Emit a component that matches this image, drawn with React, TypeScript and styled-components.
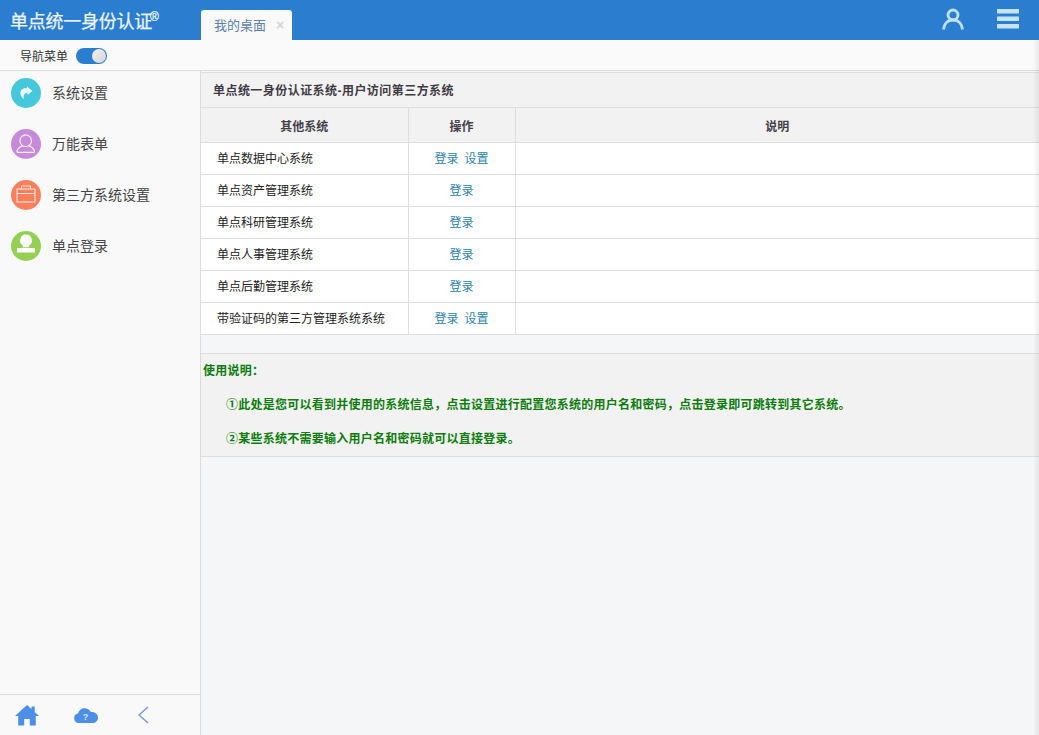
import styled, { createGlobalStyle } from "styled-components";

const GlobalStyle = createGlobalStyle`
  html, body {
    margin: 0;
    padding: 0;
    height: 100%;
    overflow: hidden;
  }
  body {
    font-family: "Liberation Sans", "Noto Sans CJK SC", sans-serif;
    font-size: 12px;
    background: #f5f6f8;
    color: #333;
  }
`;

const menuItems = [
  { name: "系统设置", color: "#45c8dc", icon: "share" },
  { name: "万能表单", color: "#c78ad8", icon: "user" },
  { name: "第三方系统设置", color: "#fb7f5c", icon: "case" },
  { name: "单点登录", color: "#95cf55", icon: "stamp" },
];

const systems = [
  { name: "单点数据中心系统", setting: true },
  { name: "单点资产管理系统", setting: false },
  { name: "单点科研管理系统", setting: false },
  { name: "单点人事管理系统", setting: false },
  { name: "单点后勤管理系统", setting: false },
  { name: "带验证码的第三方管理系统系统", setting: true },
];

function MenuIcon({ icon }: { icon: string }) {
  if (icon === "share") {
    return (
      <svg width="30" height="30" viewBox="0 0 30 30">
        <path d="M16 8.500l5.500 4.500-5 4v-2.300c-3 0-4.500 2.300-3.500 6.300-3-2-4.500-5.500-3-8.500 1.200-2 3.500-2.500 6-2.200z" fill="#fff" opacity="0.9" />
      </svg>
    );
  }
  if (icon === "user") {
    return (
      <svg width="30" height="30" viewBox="0 0 30 30" fill="none" stroke="#fff" strokeOpacity="0.85" strokeWidth="1.200">
        <circle cx="14.700" cy="11.700" r="5.800" />
        <path d="M6 23.300c0-3.500 3-5.800 5.500-6.200M23.500 23.300c0-3.500-3-5.800-5.500-6.200M6 23.300h17.500" />
      </svg>
    );
  }
  if (icon === "case") {
    return (
      <svg width="30" height="30" viewBox="0 0 30 30" fill="none" stroke="#fff" strokeOpacity="0.8" strokeWidth="1.100">
        <rect x="6" y="9" width="18" height="13" />
        <path d="M10.500 9V6h9v3M6 13.500h18" />
      </svg>
    );
  }
  return (
    <svg width="30" height="30" viewBox="0 0 30 30" fill="#fff">
      <path d="M15 3.500a6 6 0 0 1 3.500 10.800c-.6.600-.7 1.200-.2 1.900H11.700c.5-.700.400-1.300-.2-1.900A6 6 0 0 1 15 3.500z" />
      <rect x="6" y="17" width="18" height="4.500" />
    </svg>
  );
}

export default function App() {
  return (
    <Page>
      <GlobalStyle />
      <Header>
        <Logo>
          单点统一身份认证<sup>®</sup>
        </Logo>
        <Tab>
          我的桌面<TabClose>×</TabClose>
        </Tab>
        <HeaderIcons>
          <svg width="22" height="22" viewBox="0 0 22 22" fill="none" stroke="#bfe1fa" strokeWidth="2.800">
            <circle cx="11" cy="7" r="5" />
            <path d="M1.500 21.500c.5-5.500 4-9.500 9.500-9.500s9 4 9.500 9.500" />
          </svg>
          <svg width="22" height="20" viewBox="0 0 22 20" fill="#c6e5fb">
            <rect y="0" width="22" height="4.500" />
            <rect y="7.500" width="22" height="4.500" />
            <rect y="15" width="22" height="4.500" />
          </svg>
        </HeaderIcons>
      </Header>
      <SubBar>
        <span>导航菜单</span>
        <Toggle />
      </SubBar>
      <Body>
        <Sidebar>
          <Menu>
            {menuItems.map((item) => (
              <MenuItem key={item.name}>
                <MenuCircle $color={item.color}>
                  <MenuIcon icon={item.icon} />
                </MenuCircle>
                <MenuLabel>{item.name}</MenuLabel>
              </MenuItem>
            ))}
          </Menu>
          <SideFooter>
            <svg width="24" height="22" viewBox="0 0 24 22" fill="#4d8fe8">
              <path d="M12 1l4.500 4V2.500h3.200v5.400L24 12h-3.200v9.500h-6V15h-5.600v6.500h-6V12H0z" />
            </svg>
            <svg width="24" height="16" viewBox="0 0 24 16">
              <path d="M5 16a4.800 4.800 0 0 1-1-9.500C5 3 7.500 1 11 1.200c3 .2 5 1.800 5.800 3.800 4-.5 7.200 2 7.200 5.500S21.500 16 18.500 16z" fill="#4d8fe8" />
              <text x="11.500" y="12.500" fontSize="9" fontWeight="bold" fill="#d8e8fc" textAnchor="middle" fontFamily="Liberation Sans, sans-serif">?</text>
            </svg>
            <svg width="16" height="18" viewBox="0 0 16 18" fill="none" stroke="#6f93d6" strokeWidth="1.300">
              <path d="M15 1L6 9l9 8" />
            </svg>
          </SideFooter>
        </Sidebar>
        <Main>
          <Table>
            <colgroup>
              <col style={{ width: 207 }} />
              <col style={{ width: 107 }} />
              <col />
            </colgroup>
            <thead>
              <tr>
                <TitleCell colSpan={3}>单点统一身份认证系统-用户访问第三方系统</TitleCell>
              </tr>
              <tr>
                <HeadCell>其他系统</HeadCell>
                <HeadCell>操作</HeadCell>
                <HeadCell>说明</HeadCell>
              </tr>
            </thead>
            <tbody>
              {systems.map((s) => (
                <tr key={s.name}>
                  <NameCell>{s.name}</NameCell>
                  <ActionCell>
                    <ActionLink>登录</ActionLink>
                    {s.setting && <ActionLink>设置</ActionLink>}
                  </ActionCell>
                  <DescCell />
                </tr>
              ))}
            </tbody>
          </Table>
          <Notes>
            <NoteLine>使用说明：</NoteLine>
            <NoteLine $indent>①此处是您可以看到并使用的系统信息，点击设置进行配置您系统的用户名和密码，点击登录即可跳转到其它系统。</NoteLine>
            <NoteLine $indent>②某些系统不需要输入用户名和密码就可以直接登录。</NoteLine>
          </Notes>
        </Main>
      </Body>
      <EdgeShadow />
    </Page>
  );
}

const Page = styled.div`
  position: relative;
  width: 1039px;
  height: 735px;
  display: flex;
  flex-direction: column;
  overflow: hidden;
`;
const Header = styled.header`
  height: 40px;
  flex: none;
  display: flex;
  align-items: flex-end;
  background: #2b7dd0;
`;
const Logo = styled.div`
  width: 201px;
  height: 40px;
  line-height: 44px;
  padding-left: 10px;
  box-sizing: border-box;
  font-size: 18px;
  letter-spacing: -0.25px;
  color: #eef5fc;
  -webkit-text-stroke: 0.25px #eef5fc;
  white-space: nowrap;

  sup {
    font-size: 12px;
    line-height: 0;
    letter-spacing: 0;
    vertical-align: 7px;
    margin-left: -2px;
  }
`;
const Tab = styled.div`
  width: 91px;
  height: 30px;
  line-height: 31px;
  padding-left: 13px;
  box-sizing: border-box;
  background: #f9f9f9;
  border-radius: 3px 3px 0 0;
  font-size: 13px;
  color: #5b7fae;
  white-space: nowrap;
`;
const TabClose = styled.span`
  margin-left: 10px;
  font-size: 14px;
  font-weight: bold;
  color: #d5d5d5;
`;
const HeaderIcons = styled.div`
  margin-left: auto;
  height: 40px;
  display: flex;
  align-items: center;
  gap: 33px;
  padding: 0 20px 3px 0;
  box-sizing: border-box;
`;
const SubBar = styled.div`
  height: 31px;
  flex: none;
  display: flex;
  align-items: center;
  gap: 8px;
  padding-left: 20px;
  box-sizing: border-box;
  background: #fafafa;
  border-bottom: 1px solid #dcdcdc;
  color: #333;
`;
const Toggle = styled.div`
  position: relative;
  width: 31px;
  height: 16px;
  margin-top: 1px;
  border-radius: 8px;
  background: #2b7dd0;

  &::after {
    content: "";
    position: absolute;
    top: 1px;
    right: 1px;
    width: 14px;
    height: 14px;
    border-radius: 50%;
    background: linear-gradient(135deg, #f2f2f2, #d4d4d4);
  }
`;
const Body = styled.div`
  flex: 1;
  display: flex;
  min-height: 0;
`;
const Sidebar = styled.aside`
  width: 201px;
  flex: none;
  box-sizing: border-box;
  display: flex;
  flex-direction: column;
  justify-content: space-between;
  background: #f9f9f9;
  border-right: 1px solid #dcdcdc;
`;
const Menu = styled.nav`
  display: flex;
  flex-direction: column;
  gap: 7px;
`;
const MenuItem = styled.a`
  height: 44px;
  display: flex;
  align-items: center;
  gap: 11px;
  padding-left: 11px;
  font-size: 14px;
  color: #444;
`;
const MenuLabel = styled.span`
  padding-bottom: 2px;
`;
const MenuCircle = styled.span<{ $color: string }>`
  width: 30px;
  height: 30px;
  border-radius: 50%;
  overflow: hidden;
  display: flex;
  background: ${(p) => p.$color};
`;
const SideFooter = styled.div`
  height: 41px;
  box-sizing: border-box;
  display: flex;
  align-items: center;
  gap: 35px;
  padding-left: 15px;
  border-top: 1px solid #dcdcdc;
`;
const Main = styled.main`
  flex: 1;
  min-width: 0;
  padding-top: 1px;
`;
const Table = styled.table`
  width: 838px;
  table-layout: fixed;
  border-collapse: collapse;
  background: #fff;
`;
const TitleCell = styled.th`
  height: 35px;
  padding: 0 0 2px 12px;
  box-sizing: border-box;
  text-align: left;
  font-size: 12px;
  letter-spacing: 0.45px;
  color: #3f3a44;
  background: #f2f2f2;
  border-top: 1px solid #dedede;
  border-bottom: 1px solid #dedede;
`;
const HeadCell = styled.th`
  height: 35px;
  padding: 0;
  box-sizing: border-box;
  font-size: 12px;
  color: #443f48;
  background: #f2f2f2;
  border: 1px solid #dedede;
  border-left: 0;

  &:last-child {
    border-right: 0;
  }
`;
const NameCell = styled.td`
  height: 32px;
  padding: 0 0 2px 16px;
  box-sizing: border-box;
  color: #222;
  border: 1px solid #dedede;
  border-left: 0;
`;
const ActionCell = styled.td`
  height: 32px;
  padding: 0 0 2px;
  box-sizing: border-box;
  text-align: center;
  border: 1px solid #dedede;
`;
const ActionLink = styled.a`
  color: #2a82ad;

  & + & {
    margin-left: 6px;
  }
`;
const DescCell = styled.td`
  height: 32px;
  padding: 0;
  box-sizing: border-box;
  border-bottom: 1px solid #dedede;
`;
const Notes = styled.section`
  margin-top: 18px;
  background: #f2f2f2;
  border-top: 1px solid #dedede;
  border-bottom: 1px solid #dedede;
  padding-left: 2px;
`;
const NoteLine = styled.p<{ $indent?: boolean }>`
  margin: 0;
  height: 34px;
  line-height: 35px;
  padding-left: ${(p) => (p.$indent ? "23px" : "0")};
  font-size: 12px;
  font-weight: bold;
  letter-spacing: 0.25px;
  color: #0c7c0c;
  white-space: nowrap;
`;
const EdgeShadow = styled.div`
  position: absolute;
  top: 40px;
  right: 0;
  bottom: 0;
  width: 6px;
  background: linear-gradient(to right, rgba(0, 0, 0, 0), rgba(0, 0, 0, 0.07));
`;
